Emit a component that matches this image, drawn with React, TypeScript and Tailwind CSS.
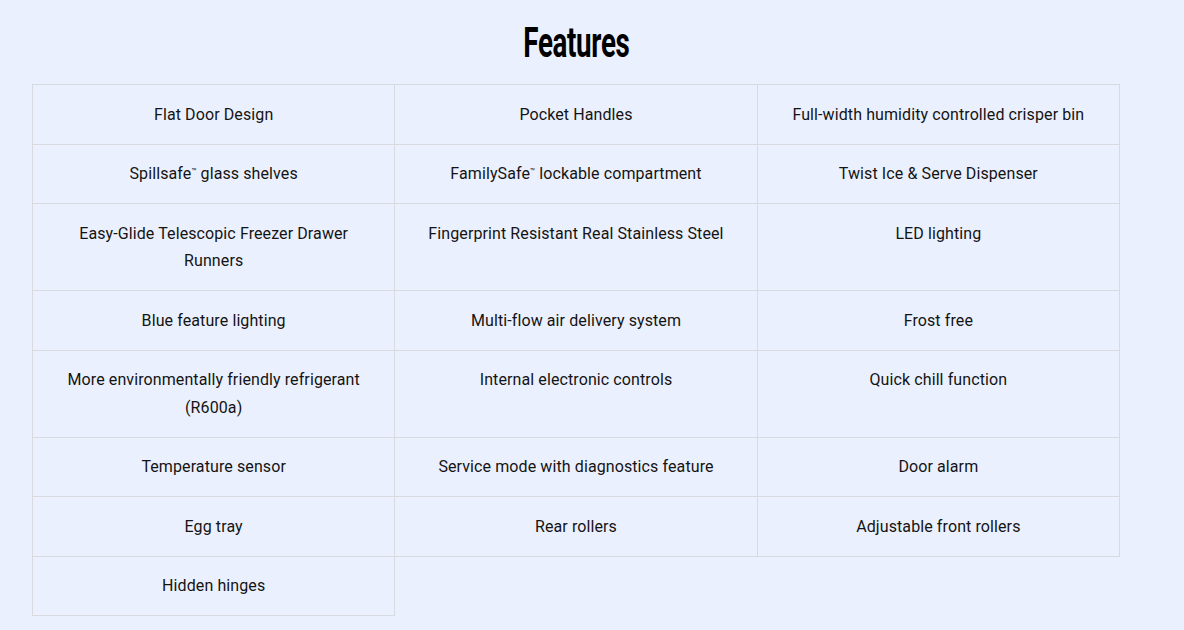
import React from "react";

const items: string[] = [
  "Flat Door Design",
  "Pocket Handles",
  "Full-width humidity controlled crisper bin",
  "Spillsafe™ glass shelves",
  "FamilySafe™ lockable compartment",
  "Twist Ice & Serve Dispenser",
  "Easy-Glide Telescopic Freezer Drawer Runners",
  "Fingerprint Resistant Real Stainless Steel",
  "LED lighting",
  "Blue feature lighting",
  "Multi-flow air delivery system",
  "Frost free",
  "More environmentally friendly refrigerant (R600a)",
  "Internal electronic controls",
  "Quick chill function",
  "Temperature sensor",
  "Service mode with diagnostics feature",
  "Door alarm",
  "Egg tray",
  "Rear rollers",
  "Adjustable front rollers",
  "Hidden hinges",
];

function Label({ text }: { text: string }) {
  const parts = text.split("™");
  return (
    <>
      {parts.map((p, i) => (
        <React.Fragment key={i}>
          {p}
          {i < parts.length - 1 && <sup className="text-[8px] -top-[0.6em]">™</sup>}
        </React.Fragment>
      ))}
    </>
  );
}

export default function App() {
  return (
    <div className="min-h-[630px] w-[1184px] bg-[#ebf0fe] pb-4" style={{ fontFamily: "Roboto, 'Noto Sans', sans-serif" }}>
      <div className="ml-8 w-[1088px]">
        <div className="flex h-[84px] items-start justify-center pt-[18px]">
          <h2 className="origin-center scale-x-[0.66] text-[42px] font-bold leading-[50px] tracking-[-0.5px] text-black">
            Features
          </h2>
        </div>
        <div className="grid grid-cols-3 border-l border-t border-[#d8dae0]">
          {items.map((t, i) => (
            <div
              key={i}
              className="border-b border-r border-[#d8dae0] px-6 py-[15.5px] text-center text-[16px] leading-[27.5px] tracking-[0.1px] text-[#141414]"
            >
              <Label text={t} />
            </div>
          ))}
        </div>
      </div>
    </div>
  );
}
